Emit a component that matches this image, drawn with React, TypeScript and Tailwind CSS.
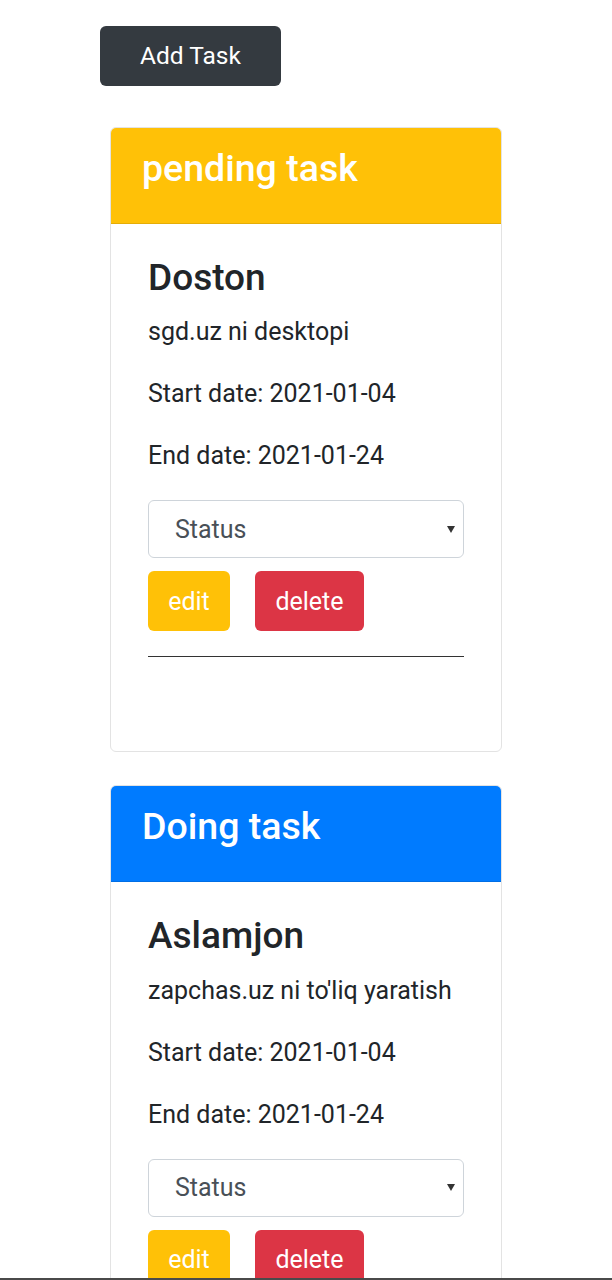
import React from "react";

type Task = {
  title: string;
  color: string;
  name: string;
  desc: string;
  start: string;
  end: string;
};

const tasks: Task[] = [
  {
    title: "pending task",
    color: "bg-[#ffc107]",
    name: "Doston",
    desc: "sgd.uz ni desktopi",
    start: "2021-01-04",
    end: "2021-01-24",
  },
  {
    title: "Doing task",
    color: "bg-[#007bff]",
    name: "Aslamjon",
    desc: "zapchas.uz ni to'liq yaratish",
    start: "2021-01-04",
    end: "2021-01-24",
  },
];

const TaskCard = ({ task }: { task: Task }) => {
  return (
    <div className="mx-[10px] flex flex-col rounded-[6px] border border-[#e3e3e3] bg-white overflow-hidden">
      {/* HEADER */}
      <div className={`${task.color} h-[96px] pl-[31px] pt-[18px] border-b border-black/10`}>
        <h3 className="text-[37.5px] font-medium leading-[1.2] text-white">{task.title}</h3>
      </div>
      {/* BODY */}
      <div className="flex flex-col px-[37px] pt-[32px] pb-[32px]">
        <h4 className="text-[37px] font-medium leading-[1.2] text-[#212529] mb-[14px]">{task.name}</h4>
        <p className="leading-[35px] mb-[27px]">{task.desc}</p>
        <p className="leading-[35px] mb-[27px]">Start date: {task.start}</p>
        <p className="leading-[35px] mb-[27px]">End date: {task.end}</p>
        <div className="flex items-center justify-between h-[58px] rounded-[6px] border border-[#ced4da] pl-[26px] pr-[7px] text-[#495057]">
          <span>Status</span>
          <svg width="10" height="9" viewBox="0 0 10 9">
            <polygon points="1,1 9,1 5,8" fill="#333" />
          </svg>
        </div>
        <div className="flex gap-[25px] mt-[13px]">
          <button className="h-[60px] w-[82px] rounded-[6px] bg-[#ffc107] text-white">edit</button>
          <button className="h-[60px] w-[109px] rounded-[6px] bg-[#dc3545] text-white">delete</button>
        </div>
        <hr className="mt-[25px] mb-[62px] border-t border-[#333]" />
      </div>
    </div>
  );
};

export default function App() {
  return (
    <div className="h-[1280px] overflow-hidden bg-white font-['Roboto',sans-serif] text-[25px] text-[#212529]">
      <div className="mx-auto w-[412px] pt-[26px] flex flex-col">
        <button className="self-start h-[60px] w-[181px] rounded-[6px] bg-[#343a40] text-white text-[24.5px]">
          Add Task
        </button>
        <div className="mt-[41px] flex flex-col gap-[33px]">
          {tasks.map((t) => (
            <TaskCard key={t.title} task={t} />
          ))}
        </div>
      </div>
      <div className="fixed bottom-0 left-0 w-full h-[2px] bg-[#4a4a4a]" />
    </div>
  );
}
